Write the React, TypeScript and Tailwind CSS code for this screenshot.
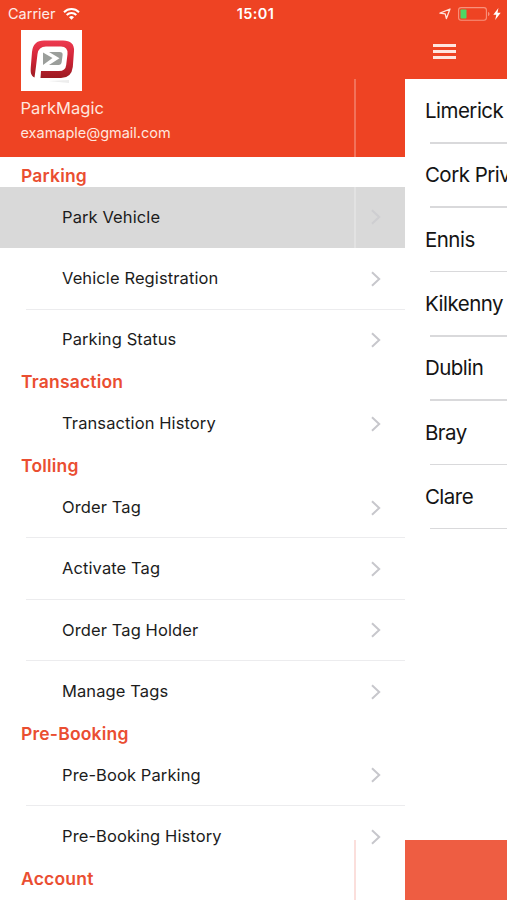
import React from 'react';

interface MenuSection {
  title: string;
  items: string[];
}

const sections: MenuSection[] = [
  { title: 'Parking', items: ['Park Vehicle', 'Vehicle Registration', 'Parking Status'] },
  { title: 'Transaction', items: ['Transaction History'] },
  { title: 'Tolling', items: ['Order Tag', 'Activate Tag', 'Order Tag Holder', 'Manage Tags'] },
  { title: 'Pre-Booking', items: ['Pre-Book Parking', 'Pre-Booking History'] },
  { title: 'Account', items: [] },
];

const cities = ['Limerick', 'Cork Priv', 'Ennis', 'Kilkenny', 'Dublin', 'Bray', 'Clare'];

const selectedItem = 'Park Vehicle';

const StatusBar: React.FC = () => (
  <div className="grid h-7 shrink-0 grid-cols-[1fr_auto_1fr] items-center bg-[#ee4323] text-white">
    <div className="flex items-center gap-[7px] pl-2">
      <span className="text-[14.5px] leading-7 text-white/90">Carrier</span>
      <svg className="h-3 w-[17px]" viewBox="0 0 17 12" fill="none" stroke="white" strokeWidth="2">
        <path d="M1 4.2a10.6 10.6 0 0 1 15 0" />
        <path d="M3.7 7a6.8 6.8 0 0 1 9.6 0" />
        <path d="M8.5 11.8 6 9.3a3.5 3.5 0 0 1 5 0z" fill="white" stroke="none" />
      </svg>
    </div>
    <span className="pl-1 text-[14.5px] font-semibold leading-7 tracking-[0.4px]">15:01</span>
    <div className="flex items-center justify-end pb-px pr-[6px]">
      <svg className="mr-[7px] h-3 w-3" viewBox="0 0 12 12" fill="none" stroke="#ffe3dc" strokeWidth="1.3" strokeLinejoin="round">
        <path d="M11 1 7.4 10.6 6.2 5.8 1 5.2z" />
      </svg>
      <svg className="h-[14px] w-8" viewBox="0 0 32 14" fill="none">
        <rect x="0.6" y="0.6" width="27.8" height="12.6" rx="2.5" stroke="#f8927d" strokeWidth="1.1" />
        <rect x="2.5" y="2.5" width="6" height="9" rx="0.8" fill="#4cd964" />
        <path d="M30 5v4c1-.3 1.5-1 1.5-2S31 5.3 30 5z" fill="#f8927d" />
      </svg>
      <svg className="ml-[3px] h-3 w-2" viewBox="0 0 8 12" fill="white">
        <path d="M5.4 0 .3 6.8h3L2.2 12 7.7 4.8H4.5z" />
      </svg>
    </div>
  </div>
);

const Logo: React.FC = () => (
  <svg className="h-[61px] w-[61px] bg-white" viewBox="0 0 61 61">
    <defs>
      <linearGradient id="logoRed" x1="0" y1="0" x2="0" y2="1">
        <stop offset="0" stopColor="#ee3a50" />
        <stop offset="0.5" stopColor="#cf2436" />
        <stop offset="1" stopColor="#9c1b22" />
      </linearGradient>
    </defs>
    <path
      d="M13.5 47.5C9.5 45.5 9.5 42 9.800 37L11 22Q12 10.500 23 10.500H42Q53.500 10.500 53 21L51.800 37Q50.500 48 40 48H19.500L20 41H38Q44.500 41 45.200 35L46.500 24Q47 16.500 40 16.500H25Q17.500 16.500 16.500 24L14.800 38Z"
      fill="url(#logoRed)"
    />
    <path d="M22 22.5 31.500 28 22 35z" fill="#9b9e9b" />
    <path d="M28 22H38.500Q42 22 41.600 25L40.700 32Q40.300 35 37.500 35H28L38.500 28.300z" fill="#9b9e9b" />
    <path d="M27 51 48 50V53z" fill="#ededed" />
  </svg>
);

const Chevron: React.FC = () => (
  <svg className="h-4 w-[10px]" viewBox="0 0 10 16" fill="none" stroke="#c7c7cc" strokeWidth="2">
    <path d="M1 1.2 8.2 8 1 14.8" />
  </svg>
);

const MenuRow: React.FC<{ label: string; divider: boolean }> = ({ label, divider }) => {
  const selected = label === selectedItem;

  return (
    <li className={`flex h-[61.4px] flex-col ${selected ? 'bg-[#d9d9d9]' : ''}`}>
      <div className="flex flex-1 items-center justify-between pb-[0.8px] pl-[62px] pr-6">
        <span className="text-[16.5px] leading-5 tracking-[0.1px] text-[#1c1c1c]">{label}</span>
        <span className={`pt-[1.5px] ${selected ? 'opacity-60' : ''}`}>
          <Chevron />
        </span>
      </div>
      <div className={`ml-[26px] h-px ${divider && !selected ? 'bg-[#ececee]' : ''}`} />
    </li>
  );
};

const Drawer: React.FC = () => (
  <aside className="relative w-[405.4px] shrink-0">
    <header className="h-[129px] bg-[#ee4323] pl-[20.5px] pt-[2px] text-[#ffe6df]">
      <Logo />
      <p className="mt-[7px] text-[16.5px] leading-5 tracking-[0.05px]">ParkMagic</p>
      <p className="mt-[5px] text-[14.5px] leading-5 tracking-[-0.02px]">examaple@gmail.com</p>
    </header>

    <nav className="pt-[7.5px]">
      {sections.map((section) => (
        <section key={section.title}>
          <h2 className="h-[22.3px] pl-[21px] text-[17.5px] font-semibold leading-[22px] tracking-[0.2px] text-[#ea4e31]">
            {section.title}
          </h2>
          <ul>
            {section.items.map((item, index) => (
              <MenuRow key={item} label={item} divider={index < section.items.length - 1} />
            ))}
          </ul>
        </section>
      ))}
    </nav>

    {/* Edge of the page underneath showing through */}
    <div className="absolute left-[354px] top-[51px] h-[78px] w-[1.5px] bg-white/25" />
    <div className="absolute left-[354px] top-[159px] h-[61px] w-[1.5px] bg-white/25" />
    <div className="absolute bottom-0 left-[353.5px] h-[60px] w-[2px] bg-[#fbdfdc]" />
  </aside>
);

const CityList: React.FC = () => (
  <main className="flex min-w-0 flex-1 flex-col">
    <div className="h-[51.4px] shrink-0 bg-[#ee4323] pl-[28px] pt-4">
      <button className="flex w-[23px] flex-col gap-[3px]" aria-label="Menu">
        <span className="h-[3px] w-full bg-[#ffe6df]" />
        <span className="h-[3px] w-full bg-[#ffe6df]" />
        <span className="h-[3px] w-full bg-[#ffe6df]" />
      </button>
    </div>
    <ul className="flex-1">
      {cities.map((city) => (
        <li key={city} className="flex h-[64.3px] flex-col">
          <span className="flex flex-1 items-center whitespace-nowrap pl-[19.5px] pt-[1.5px] text-[20.5px] tracking-[-0.5px] text-[#141414]">
            {city}
          </span>
          <span className="ml-[24.5px] h-[1.5px] bg-[#d9d9db]" />
        </li>
      ))}
    </ul>
    <footer className="h-[60px] shrink-0 bg-[#ee5d42]" />
  </main>
);

export default function App() {
  return (
    <div className="flex h-[900px] w-[507px] flex-col overflow-hidden bg-white font-['Inter',sans-serif]">
      <StatusBar />
      <div className="flex min-h-0 flex-1">
        <Drawer />
        <CityList />
      </div>
    </div>
  );
}
